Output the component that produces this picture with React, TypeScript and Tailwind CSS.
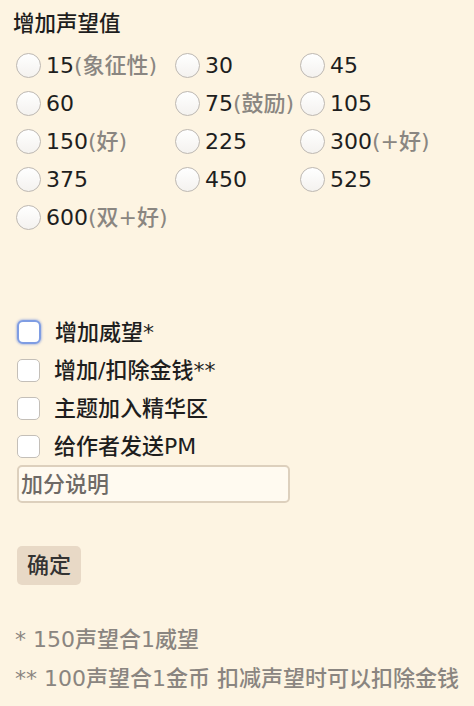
import React, { useState } from 'react';

// reputation options: value + optional gray hint
const options = [
  { v: '15', hint: '(象征性)' },
  { v: '30' },
  { v: '45' },
  { v: '60' },
  { v: '75', hint: '(鼓励)' },
  { v: '105' },
  { v: '150', hint: '(好)' },
  { v: '225' },
  { v: '300', hint: '(+好)' },
  { v: '375' },
  { v: '450' },
  { v: '525' },
  { v: '600', hint: '(双+好)' },
];

const checks = ['增加威望*', '增加/扣除金钱**', '主题加入精华区', '给作者发送PM'];

function Radio({ on }: { on: boolean }) {
  return (
    <span className="mx-[3px] flex h-[25px] w-[25px] shrink-0 items-center justify-center rounded-full border border-[#bdb8b2] bg-gradient-to-b from-white to-[#f4f2ef]">
      {on && <span className="h-[11px] w-[11px] rounded-full bg-[#3a6fd8]" />}
    </span>
  );
}

export default function App() {
  const [picked, setPicked] = useState<string | null>(null);
  const [checked, setChecked] = useState<boolean[]>([false, false, false, false]);

  return (
    <div className="min-h-screen bg-[#fdf4e2] pt-[10px] text-[22px] font-medium text-[#1e1e1e] [font-family:'DejaVu_Sans','Noto_Sans_CJK_SC',sans-serif]">
      <div className="pl-[13px] text-[21.5px] leading-[28px]">增加声望值</div>

      {/* radio grid */}
      <div className="mt-[8px] grid grid-cols-[159px_125px_1fr] pl-[13px]">
        {options.map((o) => (
          <label
            key={o.v}
            className="flex h-[38px] cursor-pointer items-center whitespace-nowrap"
            onClick={() => setPicked(o.v)}
          >
            <Radio on={picked === o.v} />
            <span className="ml-[2px]">{o.v}</span>
            {o.hint && <span className="text-[#8a8681]">{o.hint}</span>}
          </label>
        ))}
      </div>

      {/* checkboxes */}
      <div className="mt-[77px] pl-[17px]">
        {checks.map((c, i) => (
          <label
            key={c}
            className="flex h-[38px] cursor-pointer items-center"
            onClick={() =>
              setChecked((prev) => prev.map((x, j) => (j === i ? !x : x)))
            }
          >
            <span
              className={
                i === 0
                  ? 'flex h-[24px] w-[24px] shrink-0 items-center justify-center rounded-[6px] border-2 border-[#7f9de3] bg-white shadow-[0_0_2px_1px_rgba(110,140,220,0.45)]'
                  : 'flex h-[23px] w-[23px] shrink-0 items-center justify-center rounded-[5px] border border-[#c4bfb8] bg-white'
              }
            >
              {checked[i] && <span className="text-[15px] leading-none text-[#3a6fd8]">✓</span>}
            </span>
            <span className="ml-[14px]">{c}</span>
          </label>
        ))}

        <input
          placeholder="加分说明"
          className="mt-0 block h-[38px] w-[273px] rounded-[5px] border-2 border-[#ddd0bd] bg-[#fffaf0] px-[2px] text-[22px] font-medium text-[#222] outline-none placeholder:text-[#6e6a66]"
        />

        <button className="mt-[43px] h-[39px] rounded-[5px] bg-[#e8d9c6] px-[10px] text-[22px] font-medium text-[#333]">
          确定
        </button>
      </div>

      {/* notes */}
      <div className="mt-[35px] pl-[15px] text-[22px] leading-[39px] text-[#8a8580]">
        <div>* 150声望合1威望</div>
        <div>** 100声望合1金币 扣减声望时可以扣除金钱</div>
      </div>
    </div>
  );
}
